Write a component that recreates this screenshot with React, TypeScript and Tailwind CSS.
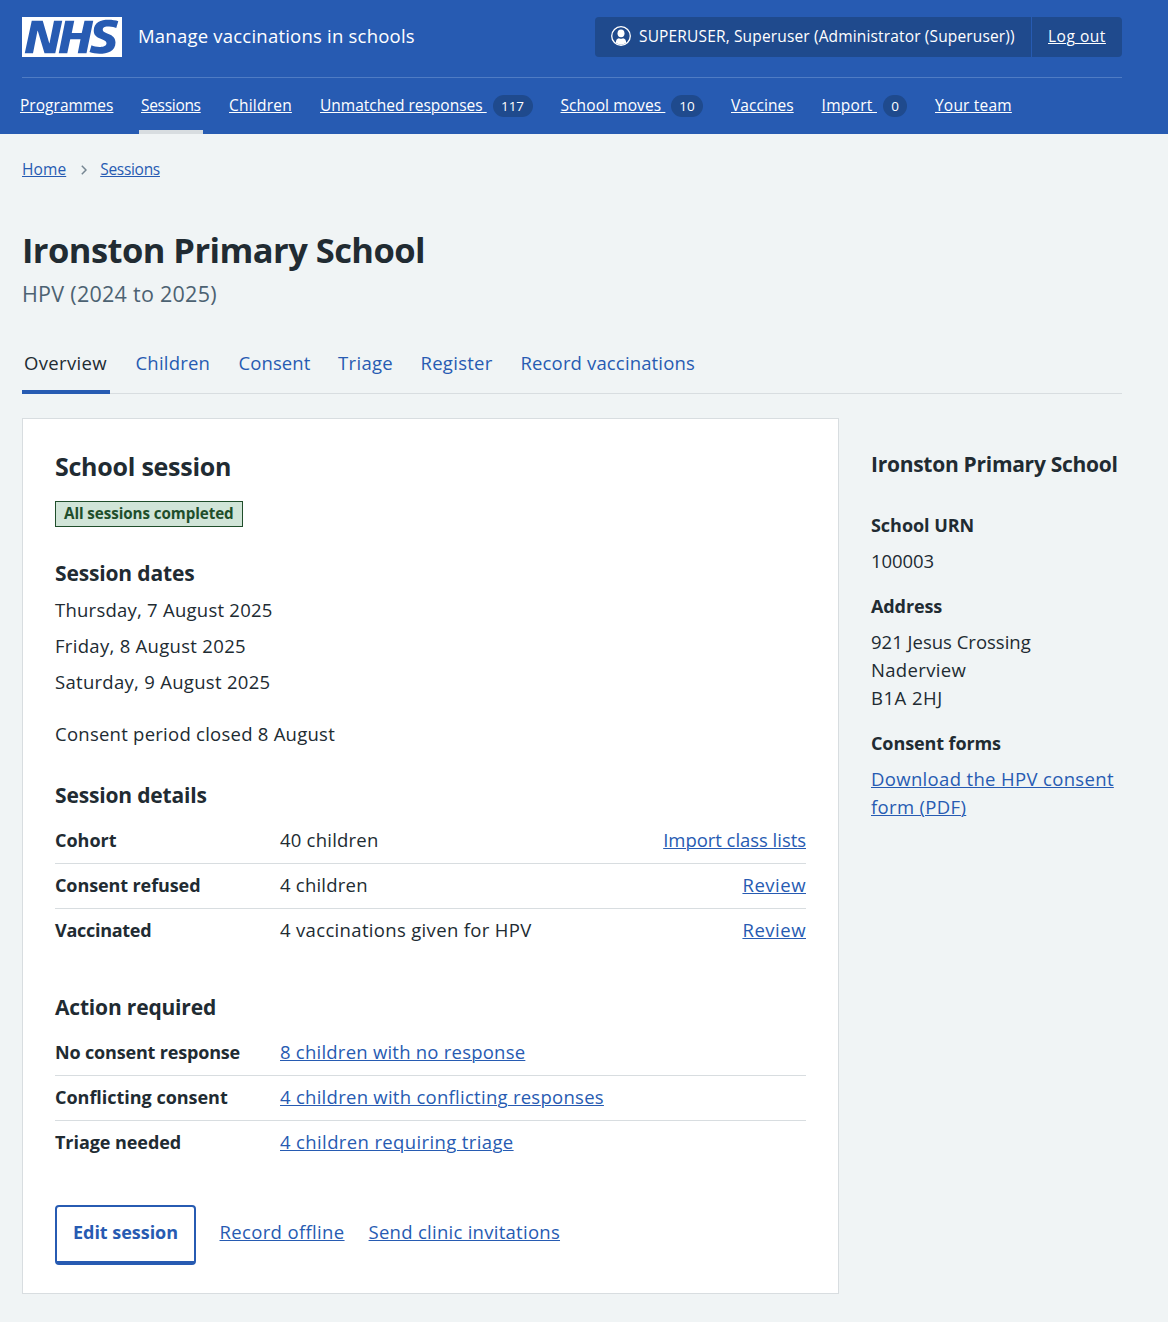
import type { ReactNode } from "react";

const link = "underline decoration-1 underline-offset-1 text-[#275bb2]";

function NhsLogo() {
  return (
    <svg viewBox="0 0 40 16" width="100" height="40" className="block shrink-0" role="img" aria-label="NHS">
      <path fill="#fff" d="M0 0h40v16H0z" />
      <path
        fill="#275bb2"
        d="M3.9 1.5h4.4l2.6 9h.1l1.8-9h3.3l-2.8 13H9l-2.7-9h-.1l-1.8 9H1.1M17.3 1.5h3.6l-1 4.9h4L25 1.5h3.5l-2.7 13h-3.5l1.1-5.6h-4.1l-1.2 5.6h-3.4M37.7 4.4c-.7-.3-1.6-.6-2.9-.6-1.4 0-2.5.2-2.5 1.3 0 1.8 5.1 1.2 5.1 5.1 0 3.6-3.3 4.5-6.4 4.5-1.3 0-2.9-.3-4-.7l.8-2.7c.7.4 2.1.7 3.2.7s2.8-.2 2.8-1.5c0-2.1-5.1-1.3-5.1-5 0-3.4 2.9-4.4 5.8-4.4 1.6 0 3.1.2 4 .6"
      />
    </svg>
  );
}

function UserIcon() {
  return (
    <svg width="20" height="20" viewBox="0 0 20 20" className="-mt-0.5 block shrink-0">
      <circle cx="10" cy="10" r="9.3" fill="none" stroke="#fff" strokeWidth="1.3" />
      <ellipse cx="10" cy="7.3" rx="3.5" ry="3.9" fill="#fff" />
      <path d="M4.8 16.8C4.9 13.8 6 12.5 8 12.2Q10 13.3 12 12.2C14 12.5 15.1 13.8 15.2 16.8Q10 20.6 4.8 16.8Z" fill="#fff" />
    </svg>
  );
}

type NavItem = { label: string; width: string; count?: string; badge?: string; current?: boolean };

const nav: NavItem[] = [
  { label: "Programmes", width: "w-[93px] tracking-[0.03px]" },
  { label: "Sessions", width: "w-[60px] tracking-[-0.3px]", current: true },
  { label: "Children", width: "w-[63px] tracking-[0.22px]" },
  { label: "Unmatched responses", width: "w-[166.5px]", count: "117", badge: "w-10" },
  { label: "School moves", width: "w-[104.5px] tracking-[0.1px]", count: "10", badge: "w-8" },
  { label: "Vaccines", width: "w-[62.5px] tracking-[0.06px]" },
  { label: "Import", width: "w-[55.5px] tracking-[0.3px]", count: "0", badge: "w-6" },
  { label: "Your team", width: "w-[77px] tracking-[0.2px]" },
];

const tabs = [
  { label: "Overview", cls: "w-[87.5px] tracking-[0.35px]", current: true },
  { label: "Children", cls: "w-[79px] tracking-[0.2px]" },
  { label: "Consent", cls: "w-[75.5px] tracking-[0.1px]" },
  { label: "Triage", cls: "w-[58.5px] tracking-[0.32px]" },
  { label: "Register", cls: "w-[76px] tracking-[0.28px]" },
  { label: "Record vaccinations", cls: "w-[179px] tracking-[0.15px]" },
];

function Header() {
  return (
    <header className="h-[134px] bg-[#275bb2] pl-[22px] pr-[46px] text-white">
      <div className="flex h-[78px] items-start border-b border-[#4f7cc4] pt-[17px]">
        <NhsLogo />
        <span className="ml-4 text-[18.5px] leading-[38px] tracking-[0.22px] whitespace-nowrap">
          Manage vaccinations in schools
        </span>
        <div className="ml-auto flex h-10 w-[527px] overflow-hidden rounded bg-[#1f4a8d] text-[15.5px] leading-[38px] whitespace-nowrap">
          <div className="flex w-[437px] items-center border-r border-[#275bb2] pl-4">
            <UserIcon />
            <span className="-mt-0.5 ml-2 tracking-[0.15px]">SUPERUSER, Superuser (Administrator (Superuser))</span>
          </div>
          <a className="pl-4 tracking-[0.53px] underline decoration-1 underline-offset-1">Log out</a>
        </div>
      </div>
      <nav className="-ml-1 flex h-14 gap-6 text-[15.5px] leading-[50px] whitespace-nowrap">
        {nav.map((n) => (
          <div
            key={n.label}
            className={`flex items-center px-0.5 ${n.current ? "border-b-4 border-[#d8dde0] pt-1" : ""}`}
          >
            <a className={`-mt-0.5 block underline decoration-1 underline-offset-1 whitespace-pre ${n.width}`}>
              {n.count ? n.label + " " : n.label}
            </a>
            {n.count && (
              <span
                className={`ml-1.5 flex h-[22px] items-center justify-center rounded-full bg-[#1f4a8d] pt-px text-[13.5px] leading-none font-medium ${n.badge}`}
              >
                {n.count}
              </span>
            )}
          </div>
        ))}
      </nav>
    </header>
  );
}

type RowProps = { label: string; track: string; children: ReactNode; action?: ReactNode; last?: boolean };

function Row({ label, track, children, action, last }: RowProps) {
  return (
    <div className={`flex h-[45px] border-b pt-[7px] ${last ? "border-transparent" : "border-[#d8dde0]"}`}>
      <dt className={`w-[225px] text-[18px] font-[680] ${track}`}>{label}</dt>
      <dd className="flex-1">{children}</dd>
      {action && <dd>{action}</dd>}
    </div>
  );
}

function Heading({ children, cls }: { children: ReactNode; cls: string }) {
  return <h3 className={`text-[21px] leading-[30px] font-[680] ${cls}`}>{children}</h3>;
}

export default function App() {
  return (
    <div className="min-h-[1322px] bg-[#f0f4f5] font-['Open_Sans','Noto_Sans',sans-serif] text-[18.5px] leading-7 text-[#212b32]">
      <Header />
      <main className="pl-[22px] pr-[46px]">
        <div className="flex items-center pt-[23px] text-[15.5px] leading-6">
          <a className={`tracking-[0.1px] ${link}`}>Home</a>
          <svg width="6" height="10" viewBox="0 0 6 10" className="mt-0.5 mr-[13px] ml-[15px]" fill="none" stroke="#768692" strokeWidth="1.5">
            <path d="M.8.8 5 5 .8 9.2" />
          </svg>
          <a className={`tracking-[-0.3px] ${link}`}>Sessions</a>
        </div>

        <h1 className="mt-[47px] text-[34.5px] leading-[44px] font-[680] tracking-[-0.55px]">Ironston Primary School</h1>
        <p className="mt-1.5 text-[21.5px] leading-8 tracking-[0.27px] text-[#4c6272]">HPV (2024 to 2025)</p>

        <div className="mt-6 flex h-[60px] gap-6 border-b border-[#d8dde0] leading-[58px] whitespace-nowrap">
          {tabs.map((t) => (
            <a
              key={t.label}
              className={`h-[60px] px-0.5 ${t.cls} ${t.current ? "border-b-4 border-[#275bb2]" : "text-[#275bb2]"}`}
            >
              {t.label}
            </a>
          ))}
        </div>

        <div className="mt-6 flex gap-8">
          <section className="h-[876px] w-[817px] border border-[#d8dde0] bg-white px-8 pt-[31px]">
            <h2 className="text-[25px] leading-8 font-[680] tracking-[-0.25px]">School session</h2>
            <strong className="mt-[19px] block h-[26px] w-[188px] border border-[#204e2b] bg-[#d1e5d8] pl-2 text-[15.2px] leading-[22px] font-[680] tracking-[-0.08px] whitespace-nowrap text-[#204e2b]">
              All sessions completed
            </strong>
            <Heading cls="mt-[31px] tracking-[-0.15px]">Session dates</Heading>
            <p className="mt-2 tracking-[0.24px]">Thursday, 7 August 2025</p>
            <p className="mt-2 tracking-[0.3px]">Friday, 8 August 2025</p>
            <p className="mt-2 tracking-[0.29px]">Saturday, 9 August 2025</p>
            <p className="mt-6 tracking-[0.25px]">Consent period closed 8 August</p>

            <Heading cls="mt-8 tracking-[-0.17px]">Session details</Heading>
            <dl className="mt-[9px]">
              <Row label="Cohort" track="tracking-[-0.02px]" action={<a className={`tracking-[-0.04px] ${link}`}>Import class lists</a>}>
                <span className="tracking-[0.22px]">40 children</span>
              </Row>
              <Row label="Consent refused" track="tracking-[-0.1px]" action={<a className={`tracking-[0.52px] ${link}`}>Review</a>}>
                <span className="tracking-[0.22px]">4 children</span>
              </Row>
              <Row label="Vaccinated" track="tracking-[-0.28px]" last action={<a className={`tracking-[0.52px] ${link}`}>Review</a>}>
                <span className="tracking-[0.33px]">4 vaccinations given for HPV</span>
              </Row>
            </dl>

            <Heading cls="mt-[38px] tracking-[-0.18px]">Action required</Heading>
            <dl className="mt-[9px]">
              <Row label="No consent response" track="tracking-[-0.17px]">
                <a className={`tracking-[0.23px] ${link}`}>8 children with no response</a>
              </Row>
              <Row label="Conflicting consent" track="tracking-[-0.02px]">
                <a className={`tracking-[0.27px] ${link}`}>4 children with conflicting responses</a>
              </Row>
              <Row label="Triage needed" track="tracking-[-0.06px]" last>
                <a className={`tracking-[0.37px] ${link}`}>4 children requiring triage</a>
              </Row>
            </dl>

            <div className="mt-[39px] flex">
              <a className="h-[60px] w-[141px] rounded border-2 border-b-4 border-[#275bb2] pt-[11px] text-center text-[18px] font-[680] tracking-[-0.03px] text-[#275bb2]">
                Edit session
              </a>
              <a className={`mt-[13px] ml-[23.5px] tracking-[0.35px] ${link}`}>Record offline</a>
              <a className={`mt-[13px] ml-6 tracking-[0.27px] ${link}`}>Send clinic invitations</a>
            </div>
          </section>

          <aside className="w-[251px] whitespace-nowrap">
            <Heading cls="mt-[31px] tracking-[-0.28px]">Ironston Primary School</Heading>
            <h4 className="mt-8 text-[18px] font-[680] tracking-[-0.04px]">School URN</h4>
            <p className="mt-2 tracking-[-0.07px]">100003</p>
            <h4 className="mt-[17px] text-[18px] font-[680] tracking-[-0.1px]">Address</h4>
            <p className="mt-2">
              921 Jesus Crossing
              <br />
              <span className="tracking-[0.33px]">Naderview</span>
              <br />
              <span className="tracking-[0.5px]">B1A 2HJ</span>
            </p>
            <h4 className="mt-[17px] text-[18px] font-[680] tracking-[-0.1px]">Consent forms</h4>
            <a className={`mt-2 block tracking-[0.34px] ${link}`}>
              Download the HPV consent
              <br />
              form (PDF)
            </a>
          </aside>
        </div>
      </main>
    </div>
  );
}
